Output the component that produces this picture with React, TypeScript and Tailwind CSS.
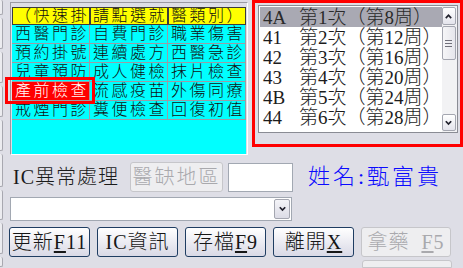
import React from "react";

const header = ["（快速掛", "請點選就", "醫類別）"];

const rows = [
  ["西醫門診", "自費門診", "職業傷害"],
  ["預約掛號", "連續處方", "西醫急診"],
  ["兒童預防", "成人健檢", "抹片檢查"],
  ["產前檢查", "流感疫苗", "外傷同療"],
  ["戒煙門診", "糞便檢查", "回復初值"],
];

const visits = [
  ["4A", "第1次（第8周）"],
  ["41", "第2次（第12周）"],
  ["42", "第3次（第16周）"],
  ["43", "第4次（第20周）"],
  ["4B", "第5次（第24周）"],
  ["44", "第6次（第28周）"],
];

function Chevron({ up = false }: { up?: boolean }) {
  return (
    <svg viewBox="0 0 10 10" aria-hidden="true" className="h-[9px] w-[9px]">
      <path
        d={up ? "M2 6.8 5 3.6 8 6.8" : "M2 3.6 5 6.8 8 3.6"}
        fill="none"
        stroke="#20202c"
        strokeWidth="1.9"
      />
    </svg>
  );
}

function Btn({
  children,
  disabled = false,
  className = "",
}: {
  children: React.ReactNode;
  disabled?: boolean;
  className?: string;
}) {
  return (
    <div
      className={
        "flex h-[30px] items-center justify-center rounded-[3px] border text-[20px] leading-none tracking-[1px] " +
        (disabled
          ? "border-[#c6c6ca] bg-[#eeeef0] text-[#a9a9ad] "
          : "border-[#1f3d62] bg-linear-to-b from-white to-[#d9d9e6] text-[#161616] ") +
        className
      }
    >
      {children}
    </div>
  );
}

// Linker Rand: abgeschnittene Nachbar-Controls
function EdgeStrip() {
  const boxes = [15, 31, 31, 31, 31, 33, 30, 31, 10];
  return (
    <div className="flex w-[3px] flex-col gap-[3px]">
      {boxes.map((h, i) => (
        <div
          key={i}
          style={{ height: h }}
          className="rounded-r-[2px] border-r border-b border-[#a8a8b0] bg-[#ececf0]"
        />
      ))}
    </div>
  );
}

export default function App() {
  return (
    <div className="relative flex h-[268px] w-[463px] overflow-hidden bg-[#dedee6] font-['Liberation_Serif','Noto_Sans_CJK_TC',serif] font-light text-[#111]">
      <EdgeStrip />

      <div className="flex flex-col pl-[6px]">
        {/* oberer Bereich: Schnellwahl-Tabelle + Besuchsliste */}
        <div className="flex h-[155px] items-start">
          <div className="ml-px mt-[2px] flex h-[153px] w-[238px] flex-col border border-b-white border-l-[#9a9aa2] border-r-white border-t-[#9a9aa2] px-px pt-[4px]">
            <div className="grid grid-cols-[78px_78px_78px] bg-[#ffff00]">
              {header.map((h) => (
                <div
                  key={h}
                  className="flex h-[18px] items-center overflow-hidden whitespace-nowrap border border-[#3c3c3c] pl-[2px] text-[16px] leading-none tracking-[2.5px]"
                >
                  {h}
                </div>
              ))}
            </div>
            <div className="flex-1 bg-[#00ffff]">
              {rows.map((r, i) => (
                <div key={i} className="grid grid-cols-[78px_78px_78px]">
                  {r.map((c) => (
                    <div
                      key={c}
                      className={
                        "flex h-[19px] items-center overflow-hidden whitespace-nowrap border-r border-b border-[#9c9ca4] pl-[3px] text-[16px] leading-none tracking-[2.5px] " +
                        (c === "產前檢查" ? "bg-[#ff0000] text-white" : "")
                      }
                    >
                      {c}
                    </div>
                  ))}
                </div>
              ))}
            </div>
          </div>

          <div className="ml-[10px] mt-[5px] flex h-[128px] w-[200px] border border-[#8a8c94] bg-white">
            <div className="flex flex-1 flex-col pt-px pl-px">
              {visits.map(([code, label], i) => (
                <div
                  key={code}
                  className={
                    "flex h-[20px] shrink-0 items-center whitespace-nowrap pl-[3px] text-[19px] leading-none " +
                    (i === 0 ? "bg-[#a9a9b3] text-[#2a2a2a]" : "text-[#1c1c1c]")
                  }
                >
                  <span className="w-[36px]">{code}</span>
                  <span>{label}</span>
                </div>
              ))}
            </div>
            <div className="flex w-[16px] flex-col gap-px bg-[#f2f2f4] py-px pr-px">
              <div className="flex h-[18px] items-center justify-center rounded-[2px] border border-[#a4a6b0] bg-linear-to-b from-white to-[#e4e4ec]">
                <Chevron up />
              </div>
              <div className="flex h-[34px] flex-col items-center justify-center gap-[2px] rounded-[2px] border border-[#a4a6b0] bg-linear-to-r from-[#f6f6f8] to-[#e6e6ec]">
                <span className="h-px w-[7px] bg-[#70707a]" />
                <span className="h-px w-[7px] bg-[#70707a]" />
                <span className="h-px w-[7px] bg-[#70707a]" />
              </div>
              <div className="flex-1" />
              <div className="flex h-[17px] items-center justify-center rounded-[2px] border border-[#a4a6b0] bg-linear-to-b from-white to-[#e4e4ec]">
                <Chevron />
              </div>
            </div>
          </div>
        </div>

        {/* IC-Zeile */}
        <div className="mt-[7px] flex h-[30px] items-center">
          <div className="w-[121px] pl-[4px] text-[20px] leading-none tracking-[1px] text-[#1a1a1a]">
            IC異常處理
          </div>
          <Btn disabled className="h-[29px] w-[93px] tracking-[2px]">
            醫缺地區
          </Btn>
          <div className="ml-[5px] h-[29px] w-[65px] border border-[#a2a8b2] bg-white" />
          <div className="ml-[15px] text-[22px] leading-none tracking-[3px] text-[#0a0aff]">
            姓名:甄富貴
          </div>
        </div>

        {/* Auswahlfeld */}
        <div className="ml-px mt-[5px] flex h-[29px] w-[282px] border border-[#a2a8b2] bg-white">
          <div className="flex-1" />
          <div className="m-px flex w-[16px] items-center justify-center rounded-[2px] border border-[#a4a6b0] bg-linear-to-b from-[#f4f4f8] to-[#dcdce6]">
            <Chevron />
          </div>
        </div>

        {/* Aktionsleiste */}
        <div className="mt-[6px] flex gap-[7px]">
          <Btn className="w-[81px]">
            更新<span className="underline underline-offset-2">F</span>11
          </Btn>
          <Btn className="w-[81px]">IC資訊</Btn>
          <Btn className="w-[81px]">
            存檔<span className="underline underline-offset-2">F</span>9
          </Btn>
          <Btn className="w-[81px]">
            離開<span className="underline underline-offset-2">X</span>
          </Btn>
          <Btn disabled className="w-[90px]">
            拿藥&nbsp;&nbsp;<span className="underline underline-offset-2">F</span>5
          </Btn>
        </div>
        <div className="ml-[353px] mt-[3px] h-[10px] w-[90px] rounded-t-[3px] border border-[#c6c6ca] bg-[#eeeef0]" />
      </div>

      {/* rote Markierungen */}
      <div className="absolute left-[5px] top-[77px] h-[27px] w-[90px] border-[3px] border-[#ff0000]" />
      <div className="absolute left-[252px] top-0 h-[147px] w-[211px] border-[3px] border-[#ff0000]" />
    </div>
  );
}
